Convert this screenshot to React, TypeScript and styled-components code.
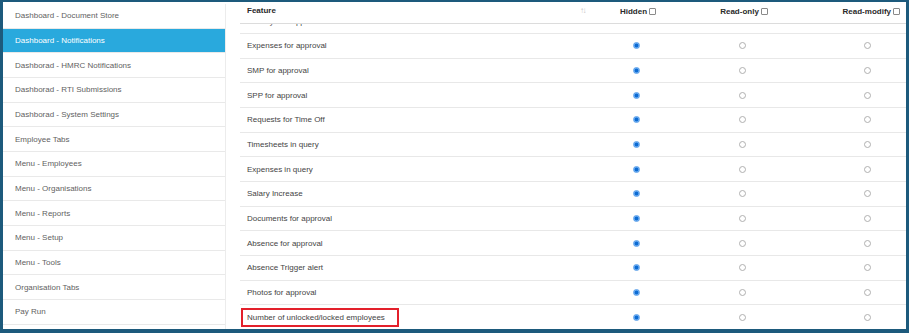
import styled, { createGlobalStyle } from "styled-components";

const GlobalStyle = createGlobalStyle`
  html, body {
    margin: 0;
    padding: 0;
    background: #ffffff;
  }
  body {
    font-family: "Liberation Sans", Arial, sans-serif;
    font-size: 8px;
  }
`;

const Frame = styled.div`
  box-sizing: border-box;
  width: 909px;
  height: 333px;
  padding-top: 2px;
  border-style: solid;
  border-color: #1d5a7c;
  border-width: 2px 3px 4px 3px;
  display: flex;
  gap: 14px;
  overflow: hidden;
  background: #fff;
`;

const Sidebar = styled.ul`
  list-style: none;
  margin: 0;
  padding: 0;
  width: 222px;
  flex-shrink: 0;
  border-right: 1px solid #ececec;
`;

const NavItem = styled.li<{ $active?: boolean }>`
  box-sizing: border-box;
  height: 24.67px;
  display: flex;
  align-items: center;
  padding-left: 12px;
  border-bottom: 1px solid #e9e9e9;
  color: ${({ $active }) => ($active ? "#ffffff" : "#5f5f5f")};
  background: ${({ $active }) => ($active ? "#29a9dd" : "transparent")};
`;

const Table = styled.div`
  flex: 1;
  display: flex;
  flex-direction: column;
  min-width: 0;
  margin-top: -2px;
`;

const Row = styled.div<{ $head?: boolean }>`
  box-sizing: border-box;
  display: grid;
  grid-template-columns: 350px 96px 116px 1fr;
  flex-shrink: 0;
  height: ${({ $head }) => ($head ? "22px" : "24.67px")};
  border-bottom: 1px solid ${({ $head }) => ($head ? "#dcdcdc" : "#e8e8e8")};
  align-items: ${({ $head }) => ($head ? "start" : "center")};
  font-weight: ${({ $head }) => ($head ? "bold" : "normal")};
  color: ${({ $head }) => ($head ? "#2a2a2a" : "#444")};
`;

const Body = styled.div`
  flex: 1;
  overflow: hidden;
  display: flex;
  flex-direction: column;
`;

/* row scrolled mostly out of view under the header */
const Clipped = styled(Row)`
  margin-top: -14.67px;
`;

const FeatureCell = styled.div<{ $head?: boolean }>`
  display: flex;
  align-items: center;
  justify-content: space-between;
  padding-left: 7px;
  padding-right: 5px;
  padding-top: ${({ $head }) => ($head ? "4px" : "0")};
`;

const SortIcon = styled.span`
  color: #c4c4c4;
  font-weight: normal;
  font-size: 8px;
  letter-spacing: -1.5px;
`;

const OptionCell = styled.div<{ $head?: boolean; $last?: boolean }>`
  display: flex;
  align-items: center;
  justify-content: ${({ $last }) => ($last ? "flex-end" : "center")};
  padding-right: ${({ $last, $head }) => ($last ? ($head ? "6px" : "35px") : "0")};
  margin-left: ${({ $head }) => ($head ? "0" : "-4px")};
  padding-top: ${({ $head }) => ($head ? "5px" : "0")};
  gap: 2px;
`;

const Check = styled.span`
  box-sizing: border-box;
  display: inline-block;
  width: 7px;
  height: 7px;
  border: 1px solid #8a8a8a;
  border-radius: 1px;
  background: #fff;
`;

const Radio = styled.span<{ $checked?: boolean }>`
  box-sizing: border-box;
  display: inline-block;
  width: 7px;
  height: 7px;
  border-radius: 50%;
  border: 1px solid ${({ $checked }) => ($checked ? "#5aa0ea" : "#b0b0b0")};
  background: ${({ $checked }) =>
    $checked ? "radial-gradient(circle, #0b6bd3 0 1.6px, #6aaaf0 2.2px)" : "#fff"};
`;

const Highlight = styled.span`
  box-sizing: border-box;
  display: inline-flex;
  align-items: center;
  height: 19px;
  margin-left: -6px;
  padding: 0 12px 0 4px;
  border: 2px solid #e3202b;
`;

const menu = [
  "Dashboard - Document Store",
  "Dashboard - Notifications",
  "Dashborad - HMRC Notifications",
  "Dashborad - RTI Submissions",
  "Dashborad - System Settings",
  "Employee Tabs",
  "Menu - Employees",
  "Menu - Organisations",
  "Menu - Reports",
  "Menu - Setup",
  "Menu - Tools",
  "Organisation Tabs",
  "Pay Run",
];

const features = [
  "Expenses for approval",
  "SMP for approval",
  "SPP for approval",
  "Requests for Time Off",
  "Timesheets in query",
  "Expenses in query",
  "Salary Increase",
  "Documents for approval",
  "Absence for approval",
  "Absence Trigger alert",
  "Photos for approval",
];

function Options() {
  return (
    <>
      <OptionCell>
        <Radio $checked />
      </OptionCell>
      <OptionCell>
        <Radio />
      </OptionCell>
      <OptionCell $last>
        <Radio />
      </OptionCell>
    </>
  );
}

export default function App() {
  return (
    <>
      <GlobalStyle />
      <Frame>
        <Sidebar>
          {menu.map((item, i) => (
            <NavItem key={item} $active={i === 1}>
              {item}
            </NavItem>
          ))}
        </Sidebar>
        <Table>
          <Row $head>
            <FeatureCell $head>
              <span>Feature</span>
              <SortIcon>↑↓</SortIcon>
            </FeatureCell>
            <OptionCell $head>
              Hidden <Check />
            </OptionCell>
            <OptionCell $head>
              Read-only <Check />
            </OptionCell>
            <OptionCell $head $last>
              Read-modify <Check />
            </OptionCell>
          </Row>
          <Body>
            <Clipped>
              <FeatureCell>Holidays for approval</FeatureCell>
            </Clipped>
            {features.map((f) => (
              <Row key={f}>
                <FeatureCell>{f}</FeatureCell>
                <Options />
              </Row>
            ))}
            <Row>
              <FeatureCell>
                <Highlight>Number of unlocked/locked employees</Highlight>
              </FeatureCell>
              <Options />
            </Row>
          </Body>
        </Table>
      </Frame>
    </>
  );
}
